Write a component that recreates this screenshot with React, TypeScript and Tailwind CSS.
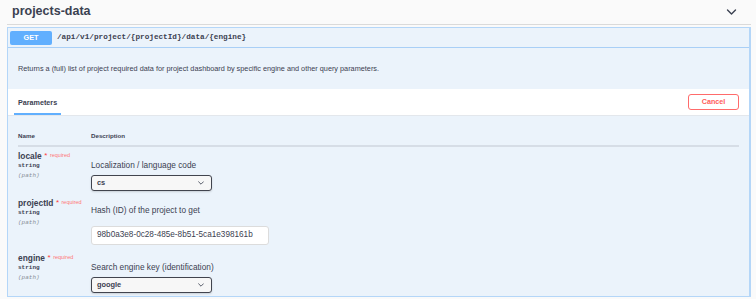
import { ReactNode } from 'react';

type Param = {
  name: string;
  desc: string;
  kind: 'select' | 'input';
  value: string;
};

const params: Param[] = [
  { name: 'locale', desc: 'Localization / language code', kind: 'select', value: 'cs' },
  {
    name: 'projectId',
    desc: 'Hash (ID) of the project to get',
    kind: 'input',
    value: '98b0a3e8-0c28-485e-8b51-5ca1e398161b',
  },
  { name: 'engine', desc: 'Search engine key (identification)', kind: 'select', value: 'google' },
];

function Chevron({ className }: { className?: string }) {
  return (
    <svg viewBox="0 0 10 6" className={className} fill="none">
      <path d="M1 1l4 4 4-4" stroke="currentColor" strokeWidth="1.4" strokeLinecap="round" strokeLinejoin="round" />
    </svg>
  );
}

function Select({ value }: { value: string }) {
  return (
    <div className="mt-[5px] flex h-[16px] w-[121px] items-center justify-between rounded-[3px] border border-[#41444e] bg-[#f7f7f7] pl-[5px] pr-[7px] shadow-[0_1px_2px_rgba(0,0,0,0.15)]">
      <span className="text-[7.4px] font-bold leading-none">{value}</span>
      <Chevron className="h-[4px] w-[6px] text-[#3b4151]" />
    </div>
  );
}

function Input({ value }: { value: string }) {
  return (
    <div className="mt-[11px] flex h-[19px] w-[178px] items-center rounded-[3px] border border-[#dcdcdc] bg-white pl-[5px]">
      <span className="text-[8.2px] leading-none">{value}</span>
    </div>
  );
}

function ParamRow({ p }: { p: Param }) {
  const isInput = p.kind === 'input';
  let control: ReactNode = <Select value={p.value} />;
  if (isInput) control = <Input value={p.value} />;
  return (
    <div className={`flex ${isInput ? 'pb-[4px]' : 'pb-[3px]'}`}>
      <div className="w-[73px] shrink-0 pt-[4px]">
        <div className="flex h-[10px] items-start leading-[10px]">
          <span className="text-[8.4px] font-bold">{p.name}</span>
          <span className="ml-[2.5px] text-[8px] text-[#ff3b3b]">*</span>
          <span className="relative -top-[1px] ml-[2.5px] text-[5.5px] text-[#ff7676]">required</span>
        </div>
        <div className="h-[10px] font-['Liberation_Mono',monospace] text-[6px] font-bold leading-[10px]">string</div>
        <div className="h-[10px] font-['Liberation_Mono',monospace] text-[6px] italic leading-[10px] text-[#8a8f99]">
          (path)
        </div>
      </div>
      <div className={isInput ? 'pt-[11px]' : 'pt-[13px]'}>
        <div className="text-[8.3px] leading-[10px]">{p.desc}</div>
        {control}
      </div>
    </div>
  );
}

export default function App() {
  return (
    <div className="h-[299px] w-[756px] overflow-hidden bg-[#fafafa] font-['Liberation_Sans',Arial,sans-serif] text-[#3b4151]">
      <div className="ml-[7px] w-[744px]">
        <div className="flex h-[25px] items-center justify-between border-b border-[#dadada] pl-[5px] pr-[14px]">
          <h3 className="pb-[1px] text-[12.5px] font-bold leading-none">projects-data</h3>
          <Chevron className="h-[6px] w-[11px] text-[#3b4151]" />
        </div>

        <div className="mt-[2px] border border-r-2 border-[#b4d6f8] bg-[#ebf3fb]">
          <div className="flex h-[20px] items-center border-b border-[#a9cff6] pl-[2px]">
            <div className="flex h-[14px] w-[42px] items-center justify-center rounded-[2px] bg-[#61affe] text-[7.3px] font-bold leading-none text-white">
              GET
            </div>
            <span className="ml-[5px] font-['Liberation_Mono',monospace] text-[7.7px] font-bold leading-none">
              /api/v1/project/{'{projectId}'}/data/{'{engine}'}
            </span>
          </div>

          <div className="flex h-[41px] items-center pl-[10px]">
            <p className="text-[7.3px] leading-none">
              Returns a (full) list of project required data for project dashboard by specific engine and other query
              parameters.
            </p>
          </div>

          <div className="flex h-[27px] items-stretch justify-between border-b border-[#e3e7ec] bg-white pr-[10px]">
            <div className="ml-[6px] flex items-center border-b-2 border-[#61affe] px-[4px] pt-[3px]">
              <span className="text-[7.2px] font-bold leading-none">Parameters</span>
            </div>
            <button className="self-center flex h-[16px] w-[51px] items-center justify-center rounded-[3px] border-[1.5px] border-[#ff6b6b] bg-white text-[7.2px] font-bold leading-none text-[#ff5c5c]">
              Cancel
            </button>
          </div>

          <div className="px-[10px]">
            <div className="flex border-b-2 border-[#d6dde6] pb-[5px] pt-[16px] text-[6.2px] font-bold leading-[8px]">
              <div className="w-[73px]">Name</div>
              <div>Description</div>
            </div>
            {params.map((p) => (
              <ParamRow key={p.name} p={p} />
            ))}
          </div>
        </div>
      </div>
    </div>
  );
}
